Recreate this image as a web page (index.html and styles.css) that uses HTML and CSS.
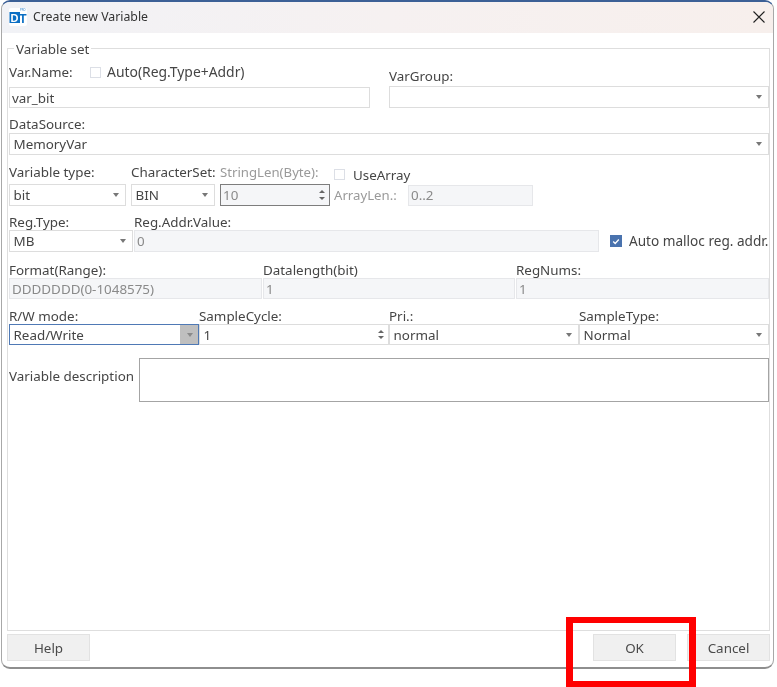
FILE: index.html
```html
<!DOCTYPE html>
<html lang="en">
<head>
<meta charset="utf-8">
<title>Create new Variable</title>
<link rel="stylesheet" href="styles.css">
</head>
<body>
<div class="window">
  <header class="titlebar">
    <svg class="logo" width="18" height="18" viewBox="0 0 18 18">
      <rect x="0" y="0" width="18" height="18" rx="2" fill="#fff"/>
      <rect x="0.5" y="4" width="10.500" height="11" fill="#0b6fc4"/>
      <text x="5.600" y="13.500" class="logo-d">D</text>
      <text x="14" y="14.500" class="logo-t">T</text>
      <text x="11" y="2.900" class="logo-pro">PRO</text>
    </svg>
    <span class="title">Create new Variable</span>
    <svg class="close" width="12" height="12" viewBox="0 0 12 12"><path d="M.5.5l11 11M11.500.5l-11 11" fill="none" stroke="#222" stroke-width="1.1"/></svg>
  </header>

  <section class="group">
    <span class="legend">Variable set</span>

    <div class="row row-name">
      <div class="col w361">
        <div class="name-head">
          <span class="name-label">Var.Name:</span>
          <span class="check"></span>
          <span class="wide">Auto(Reg.Type+Addr)</span>
        </div>
        <div class="box h21 tight"><span>var_bit</span></div>
      </div>
      <div class="col w380">
        <div class="group-head">VarGroup:</div>
        <div class="box h22 combo"></div>
      </div>
    </div>

    <div class="row row-source">
      <div class="col full">
        <div class="lbl">DataSource:</div>
        <div class="box h22 combo"><span>MemoryVar</span></div>
      </div>
    </div>

    <div class="row row-type">
      <div class="col w117">
        <div class="lbl l21">Variable type:</div>
        <div class="box h22 combo"><span>bit</span></div>
      </div>
      <div class="col w84">
        <div class="lbl l21">CharacterSet:</div>
        <div class="box h22 combo"><span>BIN</span></div>
      </div>
      <div class="col w110">
        <div class="lbl l21 dim">StringLen(Byte):</div>
        <div class="box h22 spin spin-focus tight"><span class="dimtext">10</span><i class="up"></i><i class="down"></i></div>
      </div>
      <div class="col w200 array-col">
        <div class="array-head"><span class="check"></span><span>UseArray</span></div>
        <div class="array-body">
          <span class="array-label dim">ArrayLen.:</span>
          <div class="box h21 off w125"><span>0..2</span></div>
        </div>
      </div>
    </div>

    <div class="row row-reg">
      <div class="col w124">
        <div class="lbl l17">Reg.Type:</div>
        <div class="box h22 combo"><span>MB</span></div>
      </div>
      <div class="col w465">
        <div class="lbl l17">Reg.Addr.Value:</div>
        <div class="box h22 off"><span>0</span></div>
      </div>
      <div class="auto-malloc">
        <span class="check checked"><svg width="8" height="7" viewBox="0 0 8 7"><path d="M1.200 3.500l2 2 3.600-4" fill="none" stroke="#fff" stroke-width="1.300"/></svg></span>
        <span class="wide-m">Auto malloc reg. addr.</span>
      </div>
    </div>

    <div class="row row-format">
      <div class="col w253">
        <div class="lbl l17">Format(Range):</div>
        <div class="box h21 off"><span>DDDDDDD(0-1048575)</span></div>
      </div>
      <div class="col w252">
        <div class="lbl l17">Datalength(bit)</div>
        <div class="box h21 off"><span>1</span></div>
      </div>
      <div class="col w253">
        <div class="lbl l17">RegNums:</div>
        <div class="box h21 off"><span>1</span></div>
      </div>
    </div>

    <div class="row row-mode">
      <div class="col w190">
        <div class="lbl l17">R/W mode:</div>
        <div class="box h21 combo focus"><span>Read/Write</span></div>
      </div>
      <div class="col w190">
        <div class="lbl l17">SampleCycle:</div>
        <div class="box h21 spin"><span>1</span><i class="up"></i><i class="down"></i></div>
      </div>
      <div class="col w190">
        <div class="lbl l17">Pri.:</div>
        <div class="box h21 combo"><span>normal</span></div>
      </div>
      <div class="col w190">
        <div class="lbl l17">SampleType:</div>
        <div class="box h21 combo"><span>Normal</span></div>
      </div>
    </div>

    <div class="row row-desc">
      <span class="desc-label">Variable description</span>
      <div class="desc"></div>
    </div>
  </section>

  <footer class="buttons">
    <button class="btn">Help</button>
    <span class="spacer"></span>
    <button class="btn">OK</button>
    <button class="btn">Cancel</button>
  </footer>
</div>
<div class="highlight"></div>
</body>
</html>
```

FILE: styles.css
```css
* { box-sizing: border-box; }
html, body { margin: 0; padding: 0; background: #fff; }
body {
  width: 777px;
  height: 687px;
  overflow: hidden;
  position: relative;
  font-family: "Noto Sans", "Open Sans", sans-serif;
  font-size: 13.400px;
  line-height: 18px;
  color: #454545;
}
.window {
  margin-left: 1px;
  width: 773px;
  height: 669px;
  background: #fff;
  border: 1px solid #a8a8a8;
  border-top: 2px solid #3c6096;
  border-bottom: 2px solid #8e8e8e;
  border-radius: 9px;
  overflow: hidden;
  filter: blur(0.4px);
}
.titlebar {
  height: 31px;
  display: flex;
  align-items: center;
  background: linear-gradient(90deg, #f1f2f6 0%, #f6f1f1 50%, #f7efec 100%);
  padding: 0 8px 2px 7px;
  font-size: 12.300px;
  color: #333;
}
.logo { flex: none; }
.logo-d { font: 700 11px "Liberation Sans", sans-serif; fill: #fff; text-anchor: middle; }
.logo-t { font: 700 12px "Liberation Sans", sans-serif; fill: #0b6fc4; text-anchor: middle; }
.logo-pro { font: 700 2.600px "Liberation Sans", sans-serif; fill: #6aa5da; }
.title { margin-left: 6px; flex: 1; }
.close { flex: none; }

.group {
  position: relative;
  margin: 15px 0 0 5px;
  width: 763px;
  height: 583px;
  border: 1px solid #dedede;
  padding: 0 0 0 1px;
}
.legend {
  position: absolute;
  left: 6px;
  top: -9px;
  padding: 0 2px;
  background: #fff;
}
.row { display: flex; width: 760px; }
.col { display: flex; flex-direction: column; flex: none; }
.full { width: 760px; }
.w84 { width: 84px; }
.w110 { width: 110px; }
.w117 { width: 117px; }
.w124 { width: 124px; }
.w125 { width: 125px; }
.w190 { width: 190px; }
.w200 { width: 200px; }
.w252 { width: 252px; }
.w253 { width: 253px; }
.w361 { width: 361px; }
.w380 { width: 380px; }
.w465 { width: 465px; }

.lbl { height: 18px; white-space: nowrap; }
.l21 { height: 21px; }
.l17 { height: 17px; }
.dim { color: #9a9a9a; font-size: 13.200px; }
.wide { font-size: 13.900px; }
.wide-m { font-size: 13.600px; }

.box {
  position: relative;
  border: 1px solid #dddddd;
  background: #fff;
  padding: 0 3.500px;
  display: flex;
  align-items: center;
}
.tight { padding: 0 2px; }
.h21 { height: 21px; }
.h22 { height: 22px; }
.off { background: #f5f6f8; border-color: #e6e7ea; color: #8a8a8a; flex: none; padding: 0 2px; }
.dimtext { color: #8a8a8a; }
.combo::after {
  content: "";
  position: absolute;
  right: 6px;
  top: 50%;
  margin-top: -2px;
  border-left: 3.500px solid transparent;
  border-right: 3.500px solid transparent;
  border-top: 4px solid #777;
}
.focus { border-color: #4f79b5; }
.focus::before {
  content: "";
  position: absolute;
  right: 0;
  top: 0;
  bottom: 0;
  width: 18px;
  background: #bfbfbf;
}
.focus::after { right: 5px; z-index: 1; border-top-color: #8a8a8a; }
.spin-focus { border-color: #7d7d7d; background: #f5f6f8; }
.up, .down {
  position: absolute;
  right: 4px;
  border-left: 3px solid transparent;
  border-right: 3px solid transparent;
}
.up { top: 5px; border-bottom: 3px solid #666; }
.down { bottom: 5px; border-top: 3px solid #666; }

.check {
  display: inline-flex;
  align-items: center;
  justify-content: center;
  flex: none;
  width: 11px;
  height: 11px;
  border: 1px solid #dcdfe6;
  background: #fff;
}
.checked { width: 12px; height: 12px; background: #4a73ae; border-color: #4a73ae; }

.row-name { margin-top: 11px; }
.row-name .col + .col { margin-left: 19px; }
.name-head { height: 27px; display: flex; align-items: center; padding-bottom: 3px; white-space: nowrap; }
.name-label { width: 81px; }
.name-head .check { margin-right: 6px; }
.group-head { height: 26px; padding-top: 7px; }

.row-source { margin-top: 7px; }
.row-type { margin-top: 8px; }
.row-type .col + .col { margin-left: 5px; }
.row-type .col + .array-col { margin-left: 4px; }
.array-head { height: 21px; display: flex; align-items: center; gap: 8px; padding-top: 2px; }
.array-body { display: flex; align-items: center; height: 22px; }
.array-label { width: 74px; white-space: nowrap; }

.row-reg { margin-top: 7px; }
.row-reg .col + .col { margin-left: 1px; }
.auto-malloc {
  align-self: flex-end;
  height: 22px;
  margin-left: 11px;
  display: flex;
  align-items: center;
  gap: 7px;
  white-space: nowrap;
}
.row-format { margin-top: 9px; }
.row-format .col + .col { margin-left: 1px; }
.row-mode { margin-top: 8px; }
.row-desc { margin-top: 13px; }
.desc-label { width: 130px; margin-top: 9px; white-space: nowrap; }
.desc { width: 630px; height: 44px; border: 1px solid #a4a4a4; background: #fff; }

.buttons {
  display: flex;
  margin: 3px 0 0 5px;
  width: 763px;
}
.spacer { flex: 1; }
.btn {
  width: 83px;
  height: 27px;
  margin-left: 11px;
  padding: 0;
  border: 1px solid #e2e2e2;
  background: #f0f0f0;
  color: #4a4a4a;
  font: inherit;
}
.btn:first-child { margin-left: 0; }
.highlight {
  position: absolute;
  left: 566px;
  top: 617px;
  width: 130px;
  height: 70px;
  border: 7px solid #ff0000;
  border-top-width: 6px;
  border-bottom-width: 6px;
}
```
